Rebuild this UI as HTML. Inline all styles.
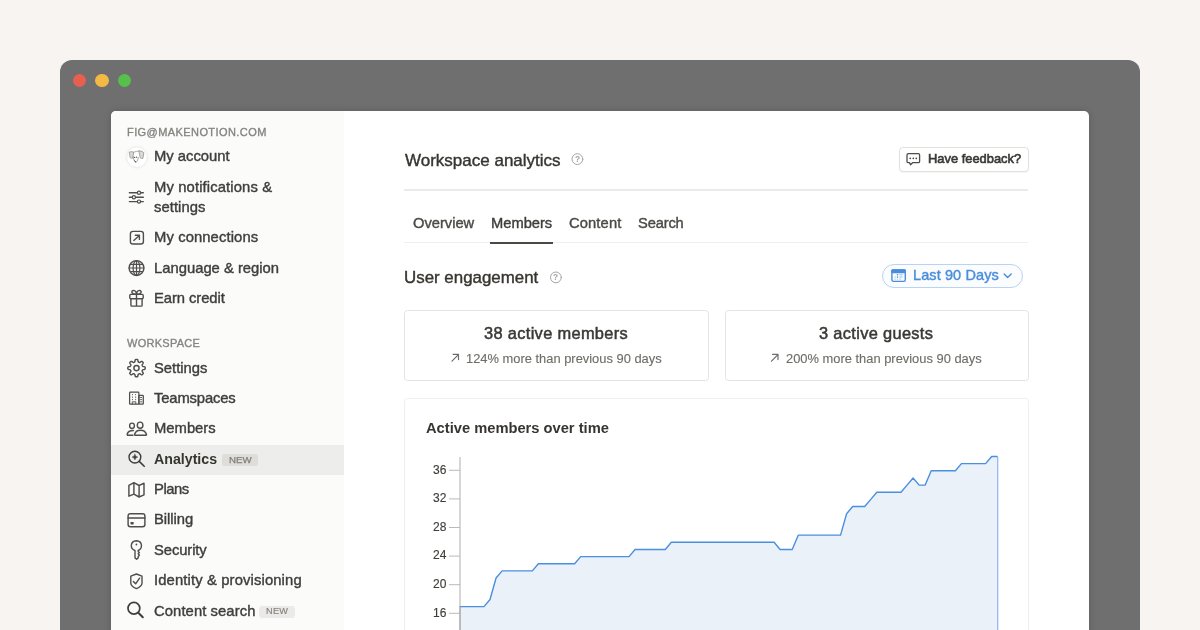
<!DOCTYPE html>
<html><head><meta charset="utf-8">
<style>
html,body{margin:0;padding:0;}
body{width:1200px;height:630px;overflow:hidden;background:#F7F4F1;position:relative;font-family:"Liberation Sans",sans-serif;}
.abs{position:absolute;}
.t{position:absolute;white-space:nowrap;will-change:transform;}
</style></head><body>
<div class="abs" style="left:60px;top:60px;width:1080px;height:600px;background:#6F6F6F;border-radius:12px;"></div>
<div class="abs" style="left:72.5px;top:73.5px;width:13.5px;height:13.5px;border-radius:50%;background:#E7604F;"></div>
<div class="abs" style="left:95px;top:73.5px;width:13.5px;height:13.5px;border-radius:50%;background:#F3B945;"></div>
<div class="abs" style="left:117.5px;top:73.5px;width:13.5px;height:13.5px;border-radius:50%;background:#57BF4B;"></div>
<div class="abs" style="left:111px;top:111px;width:978px;height:560px;background:#fff;border-radius:5px;box-shadow:0 0 7px rgba(0,0,0,0.16);overflow:hidden;">
  <div class="abs" style="left:0;top:0;width:233px;height:560px;background:#FBFBFA;"></div>
  <div class="abs" style="left:0;top:334px;width:233px;height:30px;background:#EDEDEB;"></div>
</div>
<div class="t" style="left:126.70px;top:124.64px;font-size:11.0px;line-height:14.3px;color:#85847F;font-weight:400;letter-spacing:0.42px;-webkit-text-stroke:0.35px #85847F;">FIG@MAKENOTION.COM</div>
<div class="t" style="left:154.20px;top:147.25px;font-size:14.8px;line-height:19.24px;color:#3F3E3A;font-weight:400;letter-spacing:0px;-webkit-text-stroke:0.4px #3F3E3A;">My account</div>
<div class="t" style="left:154.20px;top:177.95px;font-size:14.8px;line-height:19.24px;color:#3F3E3A;font-weight:400;letter-spacing:0.12px;-webkit-text-stroke:0.4px #3F3E3A;">My notifications &amp;</div>
<div class="t" style="left:154.20px;top:197.95px;font-size:14.8px;line-height:19.24px;color:#3F3E3A;font-weight:400;letter-spacing:0.05px;-webkit-text-stroke:0.4px #3F3E3A;">settings</div>
<div class="t" style="left:154.20px;top:228.45px;font-size:14.8px;line-height:19.24px;color:#3F3E3A;font-weight:400;letter-spacing:0.1px;-webkit-text-stroke:0.4px #3F3E3A;">My connections</div>
<div class="t" style="left:154.20px;top:258.75px;font-size:14.8px;line-height:19.24px;color:#3F3E3A;font-weight:400;letter-spacing:0px;-webkit-text-stroke:0.4px #3F3E3A;">Language &amp; region</div>
<div class="t" style="left:154.20px;top:288.75px;font-size:14.8px;line-height:19.24px;color:#3F3E3A;font-weight:400;letter-spacing:-0.08px;-webkit-text-stroke:0.4px #3F3E3A;">Earn credit</div>
<div class="t" style="left:154.20px;top:359.05px;font-size:14.8px;line-height:19.24px;color:#3F3E3A;font-weight:400;letter-spacing:0px;-webkit-text-stroke:0.4px #3F3E3A;">Settings</div>
<div class="t" style="left:154.20px;top:389.15px;font-size:14.8px;line-height:19.24px;color:#3F3E3A;font-weight:400;letter-spacing:-0.15px;-webkit-text-stroke:0.4px #3F3E3A;">Teamspaces</div>
<div class="t" style="left:154.20px;top:419.45px;font-size:14.8px;line-height:19.24px;color:#3F3E3A;font-weight:400;letter-spacing:0px;-webkit-text-stroke:0.4px #3F3E3A;">Members</div>
<div class="t" style="left:154.20px;top:480.25px;font-size:14.8px;line-height:19.24px;color:#3F3E3A;font-weight:400;letter-spacing:-0.45px;-webkit-text-stroke:0.4px #3F3E3A;">Plans</div>
<div class="t" style="left:154.20px;top:510.45px;font-size:14.8px;line-height:19.24px;color:#3F3E3A;font-weight:400;letter-spacing:-0.05px;-webkit-text-stroke:0.4px #3F3E3A;">Billing</div>
<div class="t" style="left:154.20px;top:541.25px;font-size:14.8px;line-height:19.24px;color:#3F3E3A;font-weight:400;letter-spacing:-0.1px;-webkit-text-stroke:0.4px #3F3E3A;">Security</div>
<div class="t" style="left:154.20px;top:571.45px;font-size:14.8px;line-height:19.24px;color:#3F3E3A;font-weight:400;letter-spacing:0.13px;-webkit-text-stroke:0.4px #3F3E3A;">Identity &amp; provisioning</div>
<div class="t" style="left:154.20px;top:601.95px;font-size:14.8px;line-height:19.24px;color:#3F3E3A;font-weight:400;letter-spacing:0.08px;-webkit-text-stroke:0.4px #3F3E3A;">Content search</div>
<div class="t" style="left:127.00px;top:336.24px;font-size:11.0px;line-height:14.3px;color:#85847F;font-weight:400;letter-spacing:0.27px;-webkit-text-stroke:0.35px #85847F;">WORKSPACE</div>
<div class="t" style="left:154.30px;top:449.65px;font-size:14.2px;line-height:18.46px;color:#37352F;font-weight:700;letter-spacing:0px;">Analytics</div>

<div class="abs" style="left:222.3px;top:454.3px;width:35.4px;height:11.4px;background:#DEDDDA;border-radius:3px;"></div>
<div class="t" style="left:228.60px;top:453.63px;font-size:9.7px;line-height:12.61px;color:#7F7E7A;font-weight:400;letter-spacing:0.0px;-webkit-text-stroke:0.25px #7F7E7A;">NEW</div>

<div class="abs" style="left:259px;top:605.9px;width:36.2px;height:11.8px;background:#EBEAE8;border-radius:3px;"></div>
<div class="t" style="left:266.00px;top:605.83px;font-size:9.2px;line-height:11.96px;color:#878682;font-weight:400;letter-spacing:0.25px;-webkit-text-stroke:0.2px #878682;">NEW</div>

<!-- main -->
<div class="abs" style="left:404px;top:189px;width:624px;height:1.6px;background:#EAEAE8;"></div>
<div class="abs" style="left:404px;top:242px;width:624px;height:1px;background:#EFEFED;"></div>
<div class="abs" style="left:490px;top:242px;width:63px;height:2px;background:#4A4944;"></div>
<div class="abs" style="left:899px;top:147px;width:128px;height:22.5px;border:1px solid #E1E0DD;border-radius:4px;background:#fff;box-shadow:0 1px 1px rgba(0,0,0,0.04);"></div>
<div class="abs" style="left:881.5px;top:264px;width:139.5px;height:21.5px;border:1px solid #B9D4F3;border-radius:12px;background:#FAFCFE;"></div>
<div class="abs" style="left:404px;top:310px;width:302.5px;height:69px;border:1px solid #E4E3E1;border-radius:3.5px;"></div>
<div class="abs" style="left:724.8px;top:310px;width:302.5px;height:69px;border:1px solid #E4E3E1;border-radius:3.5px;"></div>
<div class="abs" style="left:404px;top:397.5px;width:623px;height:260px;border:1px solid #F0EFEC;border-radius:3.5px;"></div>
<div class="t" style="left:405.00px;top:150.06px;font-size:17.0px;line-height:22.1px;color:#37352F;font-weight:400;letter-spacing:0px;-webkit-text-stroke:0.4px #37352F;">Workspace analytics</div>
<div class="t" style="left:412.50px;top:214.35px;font-size:14.7px;line-height:19.11px;color:#4B4A45;font-weight:400;letter-spacing:0px;-webkit-text-stroke:0.4px #4B4A45;">Overview</div>
<div class="t" style="left:490.50px;top:214.35px;font-size:14.7px;line-height:19.11px;color:#3F3E3A;font-weight:400;letter-spacing:0px;-webkit-text-stroke:0.4px #3F3E3A;">Members</div>
<div class="t" style="left:568.75px;top:214.35px;font-size:14.7px;line-height:19.11px;color:#4B4A45;font-weight:400;letter-spacing:0.14px;-webkit-text-stroke:0.4px #4B4A45;">Content</div>
<div class="t" style="left:637.50px;top:214.35px;font-size:14.7px;line-height:19.11px;color:#4B4A45;font-weight:400;letter-spacing:-0.15px;-webkit-text-stroke:0.4px #4B4A45;">Search</div>
<div class="t" style="left:404.20px;top:266.96px;font-size:16.9px;line-height:21.97px;color:#37352F;font-weight:400;letter-spacing:0px;-webkit-text-stroke:0.4px #37352F;">User engagement</div>
<div class="t" style="left:913.20px;top:265.85px;font-size:14.5px;line-height:18.85px;color:#4A8DDC;font-weight:400;letter-spacing:0.1px;-webkit-text-stroke:0.4px #4A8DDC;">Last 90 Days</div>
<div class="t" style="left:927.70px;top:151.15px;font-size:12.9px;line-height:16.77px;color:#3A3935;font-weight:400;letter-spacing:0px;-webkit-text-stroke:0.6px #3A3935;">Have feedback?</div>
<div class="t" style="left:483.60px;top:322.66px;font-size:16.4px;line-height:21.32px;color:#3A3935;font-weight:400;letter-spacing:0.33px;-webkit-text-stroke:0.5px #3A3935;">38 active members</div>
<div class="t" style="left:466.00px;top:350.95px;font-size:12.9px;line-height:16.77px;color:#6E6D69;font-weight:400;letter-spacing:0px;-webkit-text-stroke:0.12px #6E6D69;">124% more than previous 90 days</div>
<div class="t" style="left:818.80px;top:322.66px;font-size:16.4px;line-height:21.32px;color:#3A3935;font-weight:400;letter-spacing:0.33px;-webkit-text-stroke:0.5px #3A3935;">3 active guests</div>
<div class="t" style="left:786.10px;top:350.95px;font-size:12.9px;line-height:16.77px;color:#6E6D69;font-weight:400;letter-spacing:0px;-webkit-text-stroke:0.12px #6E6D69;">200% more than previous 90 days</div>
<div class="t" style="left:426.30px;top:419.45px;font-size:14.7px;line-height:19.11px;color:#37352F;font-weight:700;letter-spacing:0px;">Active members over time</div>

<svg class="abs" width="1200" height="630" style="left:0;top:0">
<path d="M459.80,640 L459.80,606.65 L465.84,606.65 L471.89,606.65 L477.93,606.65 L483.98,606.65 L490.02,599.50 L496.06,578.05 L502.11,570.90 L508.15,570.90 L514.19,570.90 L520.24,570.90 L526.28,570.90 L532.33,570.90 L538.37,563.75 L544.41,563.75 L550.46,563.75 L556.50,563.75 L562.54,563.75 L568.59,563.75 L574.63,563.75 L580.68,556.60 L586.72,556.60 L592.76,556.60 L598.81,556.60 L604.85,556.60 L610.90,556.60 L616.94,556.60 L622.98,556.60 L629.03,556.60 L635.07,549.45 L641.11,549.45 L647.16,549.45 L653.20,549.45 L659.25,549.45 L665.29,549.45 L671.33,542.30 L677.38,542.30 L683.42,542.30 L689.47,542.30 L695.51,542.30 L701.55,542.30 L707.60,542.30 L713.64,542.30 L719.68,542.30 L725.73,542.30 L731.77,542.30 L737.82,542.30 L743.86,542.30 L749.90,542.30 L755.95,542.30 L761.99,542.30 L768.03,542.30 L774.08,542.30 L780.12,549.45 L786.17,549.45 L792.21,549.45 L798.25,535.15 L804.30,535.15 L810.34,535.15 L816.39,535.15 L822.43,535.15 L828.47,535.15 L834.52,535.15 L840.56,535.15 L846.60,513.70 L852.65,506.55 L858.69,506.55 L864.74,506.55 L870.78,499.40 L876.82,492.25 L882.87,492.25 L888.91,492.25 L894.96,492.25 L901.00,492.25 L907.04,485.10 L913.09,477.95 L919.13,485.10 L925.17,485.10 L931.22,470.80 L937.26,470.80 L943.31,470.80 L949.35,470.80 L955.39,470.80 L961.44,463.65 L967.48,463.65 L973.52,463.65 L979.57,463.65 L985.61,463.65 L991.66,456.50 L997.70,456.50 L997.70,640 Z" fill="#EAF1F9"/>
<polyline points="459.80,606.65 465.84,606.65 471.89,606.65 477.93,606.65 483.98,606.65 490.02,599.50 496.06,578.05 502.11,570.90 508.15,570.90 514.19,570.90 520.24,570.90 526.28,570.90 532.33,570.90 538.37,563.75 544.41,563.75 550.46,563.75 556.50,563.75 562.54,563.75 568.59,563.75 574.63,563.75 580.68,556.60 586.72,556.60 592.76,556.60 598.81,556.60 604.85,556.60 610.90,556.60 616.94,556.60 622.98,556.60 629.03,556.60 635.07,549.45 641.11,549.45 647.16,549.45 653.20,549.45 659.25,549.45 665.29,549.45 671.33,542.30 677.38,542.30 683.42,542.30 689.47,542.30 695.51,542.30 701.55,542.30 707.60,542.30 713.64,542.30 719.68,542.30 725.73,542.30 731.77,542.30 737.82,542.30 743.86,542.30 749.90,542.30 755.95,542.30 761.99,542.30 768.03,542.30 774.08,542.30 780.12,549.45 786.17,549.45 792.21,549.45 798.25,535.15 804.30,535.15 810.34,535.15 816.39,535.15 822.43,535.15 828.47,535.15 834.52,535.15 840.56,535.15 846.60,513.70 852.65,506.55 858.69,506.55 864.74,506.55 870.78,499.40 876.82,492.25 882.87,492.25 888.91,492.25 894.96,492.25 901.00,492.25 907.04,485.10 913.09,477.95 919.13,485.10 925.17,485.10 931.22,470.80 937.26,470.80 943.31,470.80 949.35,470.80 955.39,470.80 961.44,463.65 967.48,463.65 973.52,463.65 979.57,463.65 985.61,463.65 991.66,456.50 997.70,456.50" fill="none" stroke="#4A8FE0" stroke-width="1.4" stroke-linejoin="round"/>
<line x1="997.70" y1="456.50" x2="997.70" y2="640" stroke="#8CB6EC" stroke-width="1.2"/>
<line x1="460" y1="457" x2="460" y2="606" stroke="#C2C1BF" stroke-width="1.3"/><line x1="460" y1="606" x2="460" y2="640" stroke="#9C9B98" stroke-width="1.3"/>
<line x1="449" y1="470.30" x2="460" y2="470.30" stroke="#B3B2AF" stroke-width="0.9"/><line x1="449" y1="498.90" x2="460" y2="498.90" stroke="#B3B2AF" stroke-width="0.9"/><line x1="449" y1="527.50" x2="460" y2="527.50" stroke="#B3B2AF" stroke-width="0.9"/><line x1="449" y1="556.10" x2="460" y2="556.10" stroke="#B3B2AF" stroke-width="0.9"/><line x1="449" y1="584.70" x2="460" y2="584.70" stroke="#B3B2AF" stroke-width="0.9"/><line x1="449" y1="613.30" x2="460" y2="613.30" stroke="#B3B2AF" stroke-width="0.9"/>
</svg>
<div class="t" style="left:432.50px;top:462.64px;font-size:12.0px;line-height:15.6px;color:#3F3E3A;font-weight:400;letter-spacing:0px;-webkit-text-stroke:0.15px #3F3E3A;">36</div>
<div class="t" style="left:432.50px;top:491.24px;font-size:12.0px;line-height:15.6px;color:#3F3E3A;font-weight:400;letter-spacing:0px;-webkit-text-stroke:0.15px #3F3E3A;">32</div>
<div class="t" style="left:432.50px;top:519.84px;font-size:12.0px;line-height:15.6px;color:#3F3E3A;font-weight:400;letter-spacing:0px;-webkit-text-stroke:0.15px #3F3E3A;">28</div>
<div class="t" style="left:432.50px;top:548.44px;font-size:12.0px;line-height:15.6px;color:#3F3E3A;font-weight:400;letter-spacing:0px;-webkit-text-stroke:0.15px #3F3E3A;">24</div>
<div class="t" style="left:432.50px;top:577.04px;font-size:12.0px;line-height:15.6px;color:#3F3E3A;font-weight:400;letter-spacing:0px;-webkit-text-stroke:0.15px #3F3E3A;">20</div>
<div class="t" style="left:432.50px;top:605.64px;font-size:12.0px;line-height:15.6px;color:#3F3E3A;font-weight:400;letter-spacing:0px;-webkit-text-stroke:0.15px #3F3E3A;">16</div>

<svg class="abs" width="1200" height="630" style="left:0;top:0" fill="none" stroke="#4F4E4A" stroke-linecap="round" stroke-linejoin="round">
<!-- avatar -->
<circle cx="137" cy="157.2" r="10.1" fill="#fff" stroke="#EFEEEB" stroke-width="0.6" style="filter:drop-shadow(0 0.6px 1.2px rgba(0,0,0,0.10))"/>
<path d="M129.5,152.1 Q131.2,150.9 133.6,152.2 L132.9,157.9 Q131.2,158.8 130.5,158 Z" fill="#DAD9D5" stroke="#8F8E8A" stroke-width="0.75"/>
<path d="M139.2,150.9 Q142.4,150.6 143.9,152.8 L142.9,158.4 Q141.3,158.7 140.5,157.9 Z" fill="#DAD9D5" stroke="#8F8E8A" stroke-width="0.75"/>
<path d="M133.6,152.2 Q136.4,151.3 139.2,150.9 M133.2,156.8 Q133.6,160.5 135.3,162.6 Q136.4,162.6 137.6,160.2 L138.4,157.6" stroke="#8F8E8A" stroke-width="0.75"/>
<circle cx="134.7" cy="157.4" r="0.65" fill="#444" stroke="none"/><circle cx="136.7" cy="157.2" r="0.65" fill="#444" stroke="none"/>
<path d="M134.6,160.6 L135.8,161.8" stroke="#555" stroke-width="0.9"/>
<!-- sliders -->
<path d="M129.4,192.7 H143.3 M129.4,197.3 H143.3 M129.4,201.6 H143.3" stroke-width="1.45"/>
<circle cx="139" cy="192.7" r="1.6" fill="#FBFBFA" stroke-width="1.2"/>
<circle cx="133.9" cy="197.3" r="1.6" fill="#FBFBFA" stroke-width="1.2"/>
<circle cx="139" cy="201.6" r="1.6" fill="#FBFBFA" stroke-width="1.2"/>
<!-- connections -->
<rect x="130.4" y="231.4" width="13" height="12.6" rx="2.6" stroke-width="1.4"/>
<path d="M133.8,240.4 L139.3,235.4 M135.3,235.3 H139.4 V239.4" stroke-width="1.4"/>
<!-- globe -->
<circle cx="136.5" cy="268" r="7.4" stroke-width="1.45"/>
<ellipse cx="136.5" cy="268" rx="3.4" ry="7.4" stroke-width="1.2"/>
<path d="M136.5,260.6 V275.4 M129.1,268 H143.9 M130.6,264.4 H142.4 M130.6,271.6 H142.4" stroke-width="1.2"/>
<!-- gift -->
<rect x="129.8" y="294.4" width="13.4" height="4.4" rx="1" stroke-width="1.4"/>
<path d="M130.9,298.8 V305.2 Q130.9,306.1 131.8,306.1 H141.2 Q142.1,306.1 142.1,305.2 V298.8 M136.5,294.4 V306.1" stroke-width="1.4"/>
<path d="M136.5,294.3 Q132.6,294.4 131.9,292.6 Q131.6,290.5 133.6,290.4 Q136.2,290.6 136.5,294.3 Q136.8,290.6 139.4,290.4 Q141.4,290.5 141.1,292.6 Q140.4,294.4 136.5,294.3" stroke-width="1.4"/>
<!-- gear -->
<path d="M145.20,368.10 L145.19,368.33 L145.17,368.55 L145.14,368.78 L145.06,369.00 L144.91,369.21 L144.63,369.39 L144.15,369.52 L143.56,369.60 L143.09,369.68 L142.79,369.79 L142.63,369.92 L142.53,370.06 L142.45,370.21 L142.38,370.36 L142.32,370.51 L142.26,370.66 L142.20,370.82 L142.15,370.98 L142.12,371.15 L142.14,371.36 L142.27,371.64 L142.56,372.03 L142.91,372.51 L143.16,372.94 L143.23,373.27 L143.19,373.52 L143.09,373.73 L142.96,373.91 L142.81,374.09 L142.65,374.25 L142.49,374.41 L142.31,374.56 L142.13,374.69 L141.92,374.79 L141.67,374.83 L141.34,374.76 L140.91,374.51 L140.43,374.16 L140.04,373.87 L139.76,373.74 L139.55,373.72 L139.38,373.75 L139.22,373.80 L139.06,373.86 L138.91,373.92 L138.76,373.98 L138.61,374.05 L138.46,374.13 L138.32,374.23 L138.19,374.39 L138.08,374.69 L138.00,375.16 L137.92,375.75 L137.79,376.23 L137.61,376.51 L137.40,376.66 L137.18,376.74 L136.95,376.77 L136.73,376.79 L136.50,376.80 L136.27,376.79 L136.05,376.77 L135.82,376.74 L135.60,376.66 L135.39,376.51 L135.21,376.23 L135.08,375.75 L135.00,375.16 L134.92,374.69 L134.81,374.39 L134.68,374.23 L134.54,374.13 L134.39,374.05 L134.24,373.98 L134.09,373.92 L133.94,373.86 L133.78,373.80 L133.62,373.75 L133.45,373.72 L133.24,373.74 L132.96,373.87 L132.57,374.16 L132.09,374.51 L131.66,374.76 L131.33,374.83 L131.08,374.79 L130.87,374.69 L130.69,374.56 L130.51,374.41 L130.35,374.25 L130.19,374.09 L130.04,373.91 L129.91,373.73 L129.81,373.52 L129.77,373.27 L129.84,372.94 L130.09,372.51 L130.44,372.03 L130.73,371.64 L130.86,371.36 L130.88,371.15 L130.85,370.98 L130.80,370.82 L130.74,370.66 L130.68,370.51 L130.62,370.36 L130.55,370.21 L130.47,370.06 L130.37,369.92 L130.21,369.79 L129.91,369.68 L129.44,369.60 L128.85,369.52 L128.37,369.39 L128.09,369.21 L127.94,369.00 L127.86,368.78 L127.83,368.55 L127.81,368.33 L127.80,368.10 L127.81,367.87 L127.83,367.65 L127.86,367.42 L127.94,367.20 L128.09,366.99 L128.37,366.81 L128.85,366.68 L129.44,366.60 L129.91,366.52 L130.21,366.41 L130.37,366.28 L130.47,366.14 L130.55,365.99 L130.62,365.84 L130.68,365.69 L130.74,365.54 L130.80,365.38 L130.85,365.22 L130.88,365.05 L130.86,364.84 L130.73,364.56 L130.44,364.17 L130.09,363.69 L129.84,363.26 L129.77,362.93 L129.81,362.68 L129.91,362.47 L130.04,362.29 L130.19,362.11 L130.35,361.95 L130.51,361.79 L130.69,361.64 L130.87,361.51 L131.08,361.41 L131.33,361.37 L131.66,361.44 L132.09,361.69 L132.57,362.04 L132.96,362.33 L133.24,362.46 L133.45,362.48 L133.62,362.45 L133.78,362.40 L133.94,362.34 L134.09,362.28 L134.24,362.22 L134.39,362.15 L134.54,362.07 L134.68,361.97 L134.81,361.81 L134.92,361.51 L135.00,361.04 L135.08,360.45 L135.21,359.97 L135.39,359.69 L135.60,359.54 L135.82,359.46 L136.05,359.43 L136.27,359.41 L136.50,359.40 L136.73,359.41 L136.95,359.43 L137.18,359.46 L137.40,359.54 L137.61,359.69 L137.79,359.97 L137.92,360.45 L138.00,361.04 L138.08,361.51 L138.19,361.81 L138.32,361.97 L138.46,362.07 L138.61,362.15 L138.76,362.22 L138.91,362.28 L139.06,362.34 L139.22,362.40 L139.38,362.45 L139.55,362.48 L139.76,362.46 L140.04,362.33 L140.43,362.04 L140.91,361.69 L141.34,361.44 L141.67,361.37 L141.92,361.41 L142.13,361.51 L142.31,361.64 L142.49,361.79 L142.65,361.95 L142.81,362.11 L142.96,362.29 L143.09,362.47 L143.19,362.68 L143.23,362.93 L143.16,363.26 L142.91,363.69 L142.56,364.17 L142.27,364.56 L142.14,364.84 L142.12,365.05 L142.15,365.22 L142.20,365.38 L142.26,365.54 L142.32,365.69 L142.38,365.84 L142.45,365.99 L142.53,366.14 L142.63,366.28 L142.79,366.41 L143.09,366.52 L143.56,366.60 L144.15,366.68 L144.63,366.81 L144.91,366.99 L145.06,367.20 L145.14,367.42 L145.17,367.65 L145.19,367.87 Z" stroke-width="1.4"/>
<circle cx="136.5" cy="368.1" r="2.6" stroke-width="1.45"/>
<!-- building -->
<rect x="129.6" y="392.2" width="9.3" height="12" rx="0.8" stroke-width="1.25"/>
<rect x="138.9" y="395.3" width="4.4" height="8.9" rx="0.8" stroke-width="1.25"/>
<g fill="#4F4E4A" stroke="none">
<circle cx="132.5" cy="394.6" r="0.55"/><circle cx="135.6" cy="394.6" r="0.55"/>
<circle cx="132.5" cy="397.1" r="0.65"/><circle cx="135.6" cy="397.1" r="0.65"/>
<circle cx="132.5" cy="399.6" r="0.55"/><circle cx="135.6" cy="399.6" r="0.55"/>
<rect x="140.1" y="397" width="2" height="0.9"/><rect x="140.1" y="399.2" width="2" height="0.9"/><rect x="140.1" y="401.4" width="2" height="0.9"/>
</g>
<path d="M132.3,404 V401.8 H135.8 V404" stroke-width="0.9"/>
<!-- members -->
<ellipse cx="132" cy="425.8" rx="2.4" ry="2.7" stroke-width="1.4"/>
<ellipse cx="140.1" cy="425.2" rx="2.8" ry="3.1" stroke-width="1.4"/>
<path d="M133.5,430.6 Q128.2,430.5 127.2,434.2 Q127,435.3 128.2,435.3 H132.9" stroke-width="1.45"/>
<path d="M135.2,435.3 Q134.2,435.3 134.6,434.2 Q136,430.3 140.5,430.3 Q145,430.3 146.4,434.2 Q146.8,435.3 145.8,435.3 Z" stroke-width="1.45"/>
<!-- analytics -->
<circle cx="134.9" cy="457.1" r="5.9" stroke="#3F3E3A" stroke-width="1.4"/>
<path d="M139.2,461.4 L144.2,466.3" stroke="#3F3E3A" stroke-width="1.6"/>
<path d="M134.9,454.2 Q135.3,456.7 137.8,457.1 Q135.3,457.5 134.9,460 Q134.5,457.5 132,457.1 Q134.5,456.7 134.9,454.2 Z" fill="#3F3E3A" stroke="#3F3E3A" stroke-width="0.4"/>
<!-- map -->
<path d="M128.9,485.3 L133.9,482.7 L139.1,485.5 L144,483.2 V494.8 L139.1,497 L133.9,494.2 L128.9,496.2 Z M133.9,482.7 V494.2 M139.1,485.5 V497" stroke-width="1.45"/>
<!-- card -->
<rect x="128.1" y="513.8" width="16.8" height="13" rx="2.2" stroke-width="1.45"/>
<path d="M128.1,518 H144.9" stroke-width="1.5"/>
<rect x="130.5" y="522" width="3.2" height="2.4" rx="0.6" fill="#4F4E4A" stroke="none"/>
<!-- key -->
<path d="M135,550.5 Q131.3,549.5 131.3,545.6 Q131.5,540.9 136.4,540.7 Q141.3,540.9 141.5,545.6 Q141.4,549.3 138.2,550.5 V551.6 L139.4,552.6 L138.2,553.8 L139.4,555.2 L138.2,556.4 V557.9 L136.6,559.2 L135,557.9 Z" stroke-width="1.4"/>
<circle cx="136.4" cy="544.5" r="0.9" fill="#4F4E4A" stroke="none"/>
<!-- shield -->
<path d="M136.4,574 L130.8,576.1 V583.3 Q131,586.4 136.4,588.6 Q141.8,586.4 142,583.3 V576.1 Z" stroke-width="1.4"/>
<path d="M133.4,581.5 L135.6,583.8 L139.6,578.2" stroke-width="1.45"/>
<!-- search -->
<circle cx="133.9" cy="608.3" r="5.9" stroke="#3F3E3A" stroke-width="1.7"/>
<path d="M138.3,612.7 L142.8,617.2" stroke="#3F3E3A" stroke-width="2"/>
<!-- help circles -->
<circle cx="577.4" cy="159.1" r="5.4" stroke="#A5A4A0" stroke-width="1"/>
<circle cx="555.9" cy="277.4" r="5.4" stroke="#A5A4A0" stroke-width="1"/>
<!-- chat bubble -->
<path d="M908.3,153.6 H918.3 Q919.6,153.6 919.6,154.9 V161.4 Q919.6,162.7 918.3,162.7 H912.6 L910.5,164.8 L909.6,162.7 H908.3 Q907,162.7 907,161.4 V154.9 Q907,153.6 908.3,153.6 Z" stroke="#4F4E4A" stroke-width="1.3"/>
<g fill="#3F3E3A" stroke="none"><circle cx="910.2" cy="158.3" r="0.85"/><circle cx="913.3" cy="158.3" r="0.85"/><circle cx="916.3" cy="158.3" r="0.85"/></g>
<!-- calendar -->
<rect x="891.9" y="269.9" width="13.4" height="11.5" rx="1.6" stroke="#4A8DDC" stroke-width="1.4"/>
<rect x="891.2" y="269.2" width="14.8" height="4" rx="1.4" fill="#4A8DDC" stroke="none"/>
<g fill="#4A8DDC" stroke="none">
<circle cx="897.5" cy="274.8" r="0.75"/><circle cx="897.5" cy="276.9" r="0.75"/><circle cx="897.5" cy="279" r="0.6" opacity="0.6"/>
<rect x="899.2" y="274.3" width="3.6" height="1" rx="0.5" opacity="0.55"/><rect x="899.2" y="276.4" width="3.6" height="1" rx="0.5" opacity="0.55"/><rect x="899.2" y="278.5" width="1.8" height="1" rx="0.5" opacity="0.5"/>
<circle cx="895.1" cy="276.9" r="0.6" opacity="0.55"/><circle cx="895.1" cy="279" r="0.6" opacity="0.55"/>
</g>
<!-- chevron -->
<path d="M1004.2,274.1 L1007.6,277.6 L1011.2,274.1" stroke="#4A8DDC" stroke-width="1.4"/>
<!-- card arrows -->
<path d="M452,361.2 L458.4,354.6 M453.1,354.3 H458.5 V359.6" stroke="#6E6D69" stroke-width="1.2"/>
<path d="M771.5,361.2 L777.9,354.6 M772.6,354.3 H778 V359.6" stroke="#6E6D69" stroke-width="1.2"/>
</svg>
<div class="t" style="left:574.6px;top:153.6px;font-size:8.4px;line-height:11px;color:#A5A4A0;font-weight:700">?</div>
<div class="t" style="left:553.1px;top:271.9px;font-size:8.4px;line-height:11px;color:#A5A4A0;font-weight:700">?</div>
</body></html>
